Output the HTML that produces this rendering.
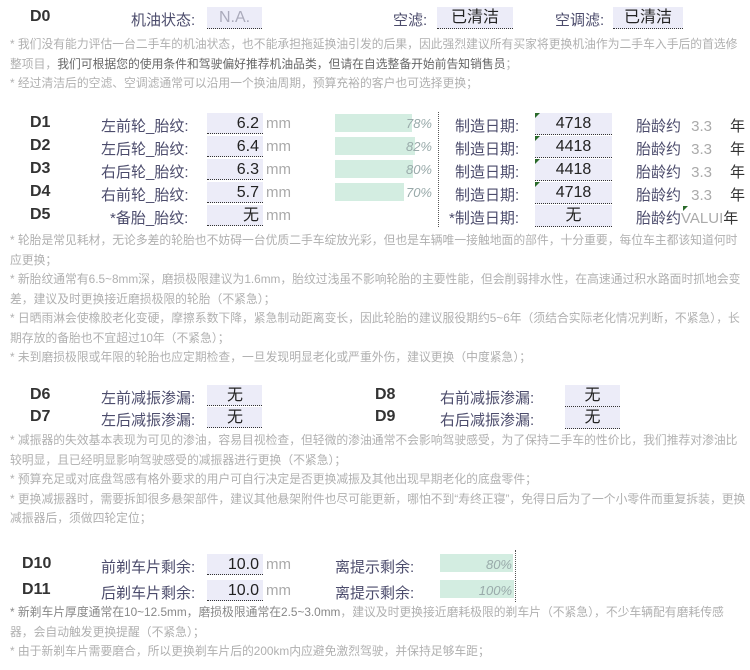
<!DOCTYPE html>
<html><head><meta charset="utf-8"><style>
body{margin:0;width:750px;height:670px;background:#fff;position:relative;overflow:hidden;font-family:"Liberation Sans","Noto Sans CJK SC",sans-serif;}
.a{position:absolute;white-space:nowrap;}
.d{font-weight:bold;font-size:16px;color:#333;}
.l{font-size:15px;color:#4c4c6c;}
.b{position:absolute;background:#ececf8;border-bottom:1px dotted #333;height:21px;font-size:16px;color:#222;text-align:center;line-height:22px;}
.r{text-align:right;padding-right:4px;box-sizing:border-box;}
.mm{font-size:15px;color:#aaa;}
.n{position:absolute;left:10px;width:737px;font-size:11.8px;color:#b0b0b0;line-height:19.5px;}
.bar{position:absolute;background:#d3ede1;height:18px;}
.pc{position:absolute;font-size:13px;font-style:italic;color:#9aa;text-align:right;}
.tri{position:absolute;width:0;height:0;border-top:5px solid #2a6a2a;border-right:5px solid transparent;}
</style></head><body>
<div class="a d" style="left:30px;top:8px">D0</div>
<div class="a l" style="left:131px;top:9px">机油状态:</div>
<div class="b" style="left:207px;top:7px;width:55px;color:#aab">N.A.</div>
<div class="a l" style="left:393px;top:9px">空滤:</div>
<div class="b" style="left:437px;top:7px;width:76px">已清洁</div>
<div class="a l" style="left:555px;top:9px">空调滤:</div>
<div class="b" style="left:613px;top:7px;width:70px">已清洁</div>
<div class="n" style="top:35px">* 我们没有能力评估一台二手车的机油状态，也不能承担拖延换油引发的后果，因此强烈建议所有买家将更换机油作为二手车入手后的首选修整项目，<span style="color:#666">我们可根据您的使用条件和驾驶偏好推荐机油品类，但请在自选整备开始前告知销售员</span>；<br>* 经过清洁后的空滤、空调滤通常可以沿用一个换油周期，预算充裕的客户也可选择更换；</div>

<div class="a" style="left:438px;top:112px;height:115px;border-left:1px dotted #555"></div>
<div class="a d" style="left:30px;top:114px">D1</div><div class="a d" style="left:30px;top:137px">D2</div><div class="a d" style="left:30px;top:160px">D3</div><div class="a d" style="left:30px;top:183px">D4</div><div class="a d" style="left:30px;top:206px">D5</div>
<div class="a l" style="left:101px;top:115px">左前轮_胎纹:</div>
<div class="a l" style="left:101px;top:138px">左后轮_胎纹:</div>
<div class="a l" style="left:101px;top:161px">右后轮_胎纹:</div>
<div class="a l" style="left:101px;top:184px">右前轮_胎纹:</div>
<div class="a l" style="left:110px;top:207px">*备胎_胎纹:</div>
<div class="b r" style="left:207px;top:113px;width:56px">6.2</div><span class="a mm" style="left:266px;top:115px">mm</span>
<div class="b r" style="left:207px;top:136px;width:56px">6.4</div><span class="a mm" style="left:266px;top:138px">mm</span>
<div class="b r" style="left:207px;top:159px;width:56px">6.3</div><span class="a mm" style="left:266px;top:161px">mm</span>
<div class="b r" style="left:207px;top:182px;width:56px">5.7</div><span class="a mm" style="left:266px;top:184px">mm</span>
<div class="b r" style="left:207px;top:205px;width:56px">无</div><span class="a mm" style="left:266px;top:207px">mm</span>
<div class="bar" style="left:335px;top:114px;width:77px"></div><div class="pc" style="left:380px;top:116px;width:52px">78%</div>
<div class="bar" style="left:335px;top:137px;width:80px"></div><div class="pc" style="left:380px;top:139px;width:52px">82%</div>
<div class="bar" style="left:335px;top:160px;width:78px"></div><div class="pc" style="left:380px;top:162px;width:52px">80%</div>
<div class="bar" style="left:335px;top:183px;width:69px"></div><div class="pc" style="left:380px;top:185px;width:52px">70%</div>
<div class="a l" style="left:455px;top:115px">制造日期:</div>
<div class="a l" style="left:455px;top:138px">制造日期:</div>
<div class="a l" style="left:455px;top:161px">制造日期:</div>
<div class="a l" style="left:455px;top:184px">制造日期:</div>
<div class="a l" style="left:449px;top:207px">*制造日期:</div>
<div class="b" style="left:535px;top:113px;width:77px">4718</div><div class="tri" style="left:535px;top:113px"></div>
<div class="b" style="left:535px;top:136px;width:77px">4418</div><div class="tri" style="left:535px;top:136px"></div>
<div class="b" style="left:535px;top:159px;width:77px">4418</div><div class="tri" style="left:535px;top:159px"></div>
<div class="b" style="left:535px;top:182px;width:77px">4718</div><div class="tri" style="left:535px;top:182px"></div>
<div class="b" style="left:535px;top:205px;width:77px">无</div>
<div class="a l" style="left:636px;top:115px">胎龄约 <span style="color:#aaa;margin-left:6px">3.3</span><span style="color:#333;margin-left:18px">年</span></div>
<div class="a l" style="left:636px;top:138px">胎龄约 <span style="color:#aaa;margin-left:6px">3.3</span><span style="color:#333;margin-left:18px">年</span></div>
<div class="a l" style="left:636px;top:161px">胎龄约 <span style="color:#aaa;margin-left:6px">3.3</span><span style="color:#333;margin-left:18px">年</span></div>
<div class="a l" style="left:636px;top:184px">胎龄约 <span style="color:#aaa;margin-left:6px">3.3</span><span style="color:#333;margin-left:18px">年</span></div>
<div class="a l" style="left:636px;top:207px">胎龄约<span style="color:#aaa">VALUI</span><span style="color:#333">年</span></div>
<div class="tri" style="left:683px;top:206px"></div>
<div class="n" style="top:231px">* 轮胎是常见耗材，无论多差的轮胎也不妨碍一台优质二手车绽放光彩，但也是车辆唯一接触地面的部件，十分重要，每位车主都该知道何时应更换；<br>* 新胎纹通常有6.5~8mm深，磨损极限建议为1.6mm，胎纹过浅虽不影响轮胎的主要性能，但会削弱排水性，在高速通过积水路面时抓地会变差，建议及时更换接近磨损极限的轮胎（不紧急）；<br>* 日晒雨淋会使橡胶老化变硬，摩擦系数下降，紧急制动距离变长，因此轮胎的建议服役期约5~6年（须结合实际老化情况判断，不紧急），长期存放的备胎也不宜超过10年（不紧急）；<br>* 未到磨损极限或年限的轮胎也应定期检查，一旦发现明显老化或严重外伤，建议更换（中度紧急）；</div>

<div class="a d" style="left:30px;top:386px">D6</div><div class="a d" style="left:30px;top:408px">D7</div>
<div class="a l" style="left:101px;top:387px">左前减振渗漏:</div>
<div class="a l" style="left:101px;top:409px">左后减振渗漏:</div>
<div class="b" style="left:207px;top:385px;width:55px;text-align:left;padding-left:20px;box-sizing:border-box">无</div>
<div class="b" style="left:207px;top:407px;width:55px;text-align:left;padding-left:20px;box-sizing:border-box">无</div>
<div class="a d" style="left:375px;top:386px">D8</div><div class="a d" style="left:375px;top:408px">D9</div>
<div class="a l" style="left:440px;top:387px">右前减振渗漏:</div>
<div class="a l" style="left:440px;top:409px">右后减振渗漏:</div>
<div class="b" style="left:565px;top:385px;width:55px">无</div>
<div class="b" style="left:565px;top:407px;width:55px">无</div>
<div class="n" style="top:431px">* 减振器的失效基本表现为可见的渗油，容易目视检查，但轻微的渗油通常不会影响驾驶感受，为了保持二手车的性价比，我们推荐对渗油比较明显，且已经明显影响驾驶感受的减振器进行更换（不紧急）；<br>* 预算充足或对底盘驾感有格外要求的用户可自行决定是否更换减振及其他出现早期老化的底盘零件；<br>* 更换减振器时，需要拆卸很多悬架部件，建议其他悬架附件也尽可能更新，哪怕不到“寿终正寝”，免得日后为了一个小零件而重复拆装，更换减振器后，须做四轮定位；</div>

<div class="a d" style="left:22px;top:555px">D10</div><div class="a d" style="left:22px;top:581px">D11</div>
<div class="a l" style="left:101px;top:556px">前剃车片剩余:</div>
<div class="a l" style="left:101px;top:582px">后剃车片剩余:</div>
<div class="b r" style="left:207px;top:554px;width:56px">10.0</div><span class="a mm" style="left:266px;top:556px">mm</span>
<div class="b r" style="left:207px;top:580px;width:56px">10.0</div><span class="a mm" style="left:266px;top:582px">mm</span>
<div class="a l" style="left:335px;top:556px">离提示剩余:</div>
<div class="a l" style="left:335px;top:582px">离提示剩余:</div>
<div class="bar" style="left:440px;top:554px;width:73px"></div><div class="pc" style="left:450px;top:557px;width:62px">80%</div>
<div class="bar" style="left:440px;top:580px;width:74px"></div><div class="pc" style="left:450px;top:583px;width:62px">100%</div>
<div class="a" style="left:515px;top:550px;height:52px;border-left:1px dotted #555"></div>
<div class="n" style="top:603px"><span style="color:#888">* 新剃车片厚度通常在10~12.5mm，磨损极限通常在2.5~3.0mm</span>，建议及时更换接近磨耗极限的剃车片（不紧急），不少车辆配有磨耗传感器，会自动触发更换提醒（不紧急）；<br>* 由于新剃车片需要磨合，所以更换剃车片后的200km内应避免激烈驾驶，并保持足够车距；</div>
</body></html>
